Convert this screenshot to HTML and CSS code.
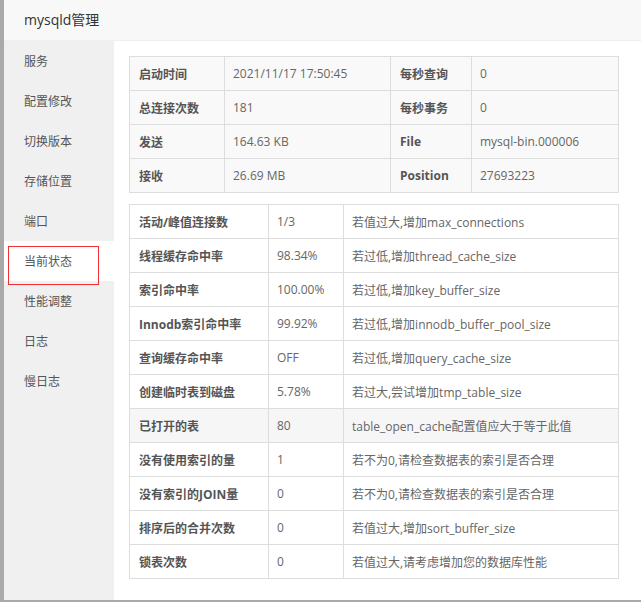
FILE: index.html
```html
<!DOCTYPE html>
<html>
<head>
  <meta charset="utf-8">
  <title>mysqld管理</title>
  <link rel="stylesheet" href="styles.css">
</head>
<body>
  <div class="layer">
    <div class="layer-title">mysqld管理</div>
    <div class="layer-body">
      <ul class="side-menu">
        <li>服务</li>
        <li>配置修改</li>
        <li>切换版本</li>
        <li>存储位置</li>
        <li>端口</li>
        <li class="active">当前状态</li>
        <li>性能调整</li>
        <li>日志</li>
        <li>慢日志</li>
      </ul>

      <div class="content">
        <table class="status-table summary">
          <colgroup>
            <col style="width: 95px"><col style="width: 166px"><col style="width: 81px"><col>
          </colgroup>
          <tr>
            <th>启动时间</th><td>2021/11/17 17:50:45</td>
            <th>每秒查询</th><td>0</td>
          </tr>
          <tr>
            <th>总连接次数</th><td>181</td>
            <th>每秒事务</th><td>0</td>
          </tr>
          <tr>
            <th>发送</th><td>164.63 KB</td>
            <th>File</th><td>mysql-bin.000006</td>
          </tr>
          <tr>
            <th>接收</th><td>26.69 MB</td>
            <th>Position</th><td>27693223</td>
          </tr>
        </table>

        <table class="status-table">
          <colgroup>
            <col style="width: 139px"><col style="width: 75px"><col>
          </colgroup>
          <tr><th>活动/峰值连接数</th><td>1/3</td><td>若值过大,增加max_connections</td></tr>
          <tr><th>线程缓存命中率</th><td>98.34%</td><td>若过低,增加thread_cache_size</td></tr>
          <tr><th>索引命中率</th><td>100.00%</td><td>若过低,增加key_buffer_size</td></tr>
          <tr><th>Innodb索引命中率</th><td>99.92%</td><td>若过低,增加innodb_buffer_pool_size</td></tr>
          <tr><th>查询缓存命中率</th><td>OFF</td><td>若过低,增加query_cache_size</td></tr>
          <tr><th>创建临时表到磁盘</th><td>5.78%</td><td>若过大,尝试增加tmp_table_size</td></tr>
          <tr class="hover"><th>已打开的表</th><td>80</td><td>table_open_cache配置值应大于等于此值</td></tr>
          <tr><th>没有使用索引的量</th><td>1</td><td>若不为0,请检查数据表的索引是否合理</td></tr>
          <tr><th>没有索引的JOIN量</th><td>0</td><td>若不为0,请检查数据表的索引是否合理</td></tr>
          <tr><th>排序后的合并次数</th><td>0</td><td>若值过大,增加sort_buffer_size</td></tr>
          <tr><th>锁表次数</th><td>0</td><td>若值过大,请考虑增加您的数据库性能</td></tr>
        </table>
      </div>
    </div>
  </div>
</body>
</html>
```

FILE: styles.css
```css
* {
  margin: 0;
  padding: 0;
  box-sizing: border-box;
}

body {
  background: #a9a9a9;
  font-family: "Open Sans", "Noto Sans CJK SC", sans-serif;
  font-size: 12px;
  color: #666;
  overflow: hidden;
}

.layer {
  margin-left: 4px;
  height: 600px;
  background: #fff;
  display: flex;
  flex-direction: column;
}

.layer-title {
  height: 41px;
  line-height: 40px;
  padding-left: 20px;
  font-size: 14px;
  color: #333;
  background: #f8f8f8;
  border-bottom: 1px solid #eee;
}

.layer-body {
  flex: 1;
  display: flex;
}

/* left menu */
.side-menu {
  width: 110px;
  background: #f0f0f0;
  list-style: none;
}

.side-menu li {
  position: relative;
  height: 40px;
  line-height: 41px;
  padding-left: 20px;
  color: #555;
}

.side-menu li.active {
  background: #fff;
}

.side-menu li.active::after {
  content: "";
  position: absolute;
  left: 4px;
  top: 5px;
  width: 89px;
  height: 37px;
  border: 1px solid #f03030;
}

/* status tables */
.content {
  flex: 1;
  padding: 15px 22px 0 15px;
}

.status-table {
  width: 490px;
  border-collapse: collapse;
  table-layout: fixed;
  background: #fff;
}

.status-table.summary {
  background: #f9f9f9;
  margin-bottom: 11px;
}

.status-table th,
.status-table td {
  height: 34px;
  padding: 0 9px;
  border: 1px solid #ddd;
  text-align: left;
  white-space: nowrap;
  overflow: hidden;
}

.status-table th {
  font-weight: 700;
  color: #555;
}

.status-table td {
  padding-left: 8px;
}

.status-table tr.hover {
  background: #f6f6f6;
}
```
